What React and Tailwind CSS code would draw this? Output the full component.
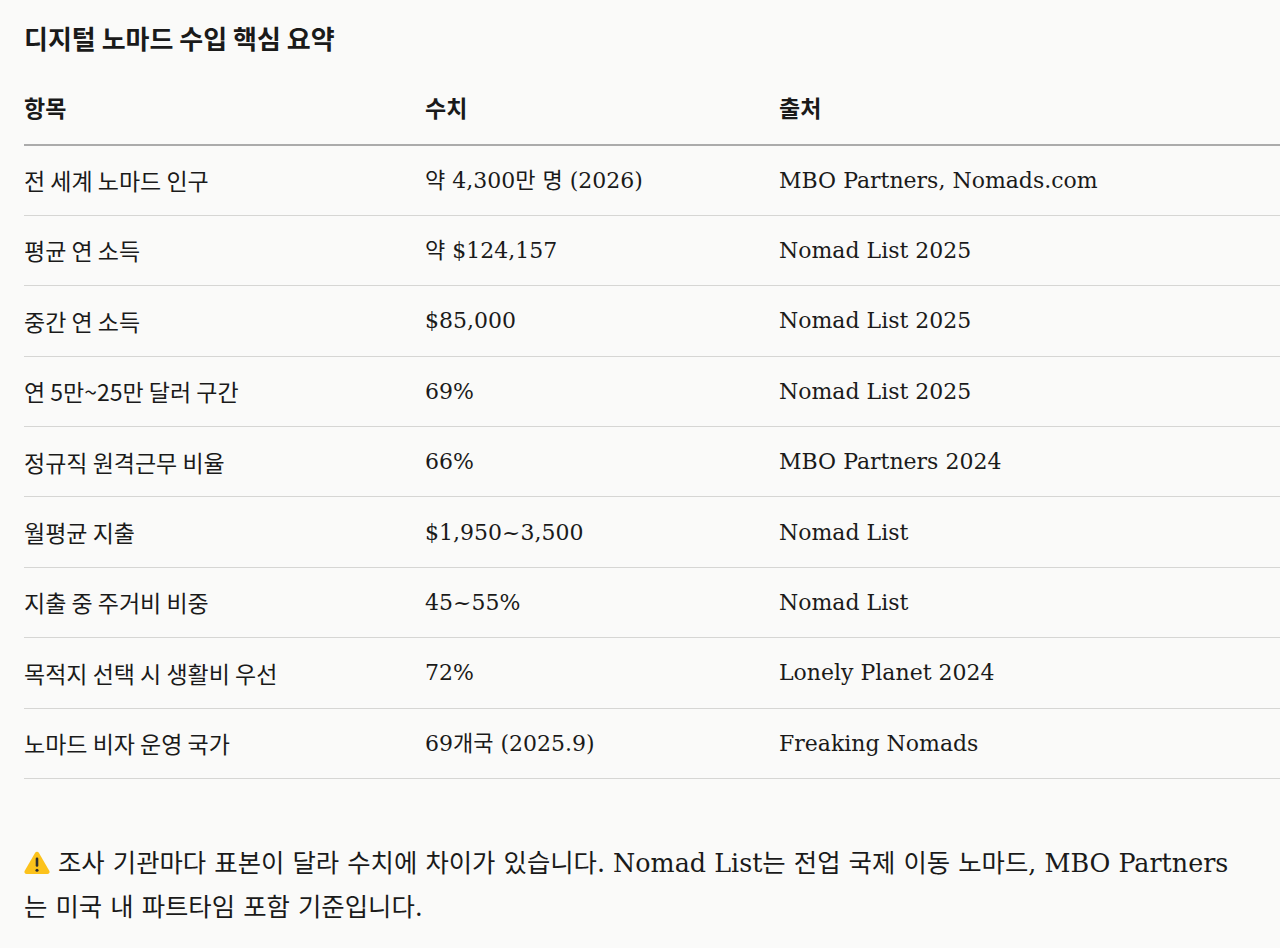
import React from "react";

const rows = [
  ["전 세계 노마드 인구", "약 4,300만 명 (2026)", "MBO Partners, Nomads.com"],
  ["평균 연 소득", "약 $124,157", "Nomad List 2025"],
  ["중간 연 소득", "$85,000", "Nomad List 2025"],
  ["연 5만~25만 달러 구간", "69%", "Nomad List 2025"],
  ["정규직 원격근무 비율", "66%", "MBO Partners 2024"],
  ["월평균 지출", "$1,950~3,500", "Nomad List"],
  ["지출 중 주거비 비중", "45~55%", "Nomad List"],
  ["목적지 선택 시 생활비 우선", "72%", "Lonely Planet 2024"],
  ["노마드 비자 운영 국가", "69개국 (2025.9)", "Freaking Nomads"],
];

function Warn() {
  return (
    <svg width="26" height="24" viewBox="0 0 24 22" className="inline-block align-[-3px] mr-[8px]">
      <path d="M10.3 1.6a2 2 0 0 1 3.4 0l9.6 16.6a2 2 0 0 1-1.7 3H2.4a2 2 0 0 1-1.7-3z" fill="#fcc21b" />
      <rect x="10.8" y="6" width="2.4" height="8.5" rx="1.1" fill="#2f2f2f" />
      <circle cx="12" cy="17.6" r="1.4" fill="#2f2f2f" />
    </svg>
  );
}

export default function App() {
  return (
    <div className="min-h-screen bg-[#fafaf9] pl-6 pt-[22px] text-[#1a1a1a] font-['DejaVu_Serif','Noto_Sans_CJK_KR',sans-serif]">
      <h2 className="h-8 leading-8 text-[26px] font-bold font-['Noto_Sans_CJK_KR',sans-serif]">
        디지털 노마드 수입 핵심 요약
      </h2>

      <table className="mt-[21px] w-full border-collapse text-[22px]">
        <thead>
          <tr className="h-[70px] border-b-2 border-[#ababab]">
            <th className="w-[401px] p-0 pb-1 text-left text-[23px] font-bold font-['Noto_Sans_CJK_KR',sans-serif]">항목</th>
            <th className="w-[354px] p-0 pb-1 text-left text-[23px] font-bold font-['Noto_Sans_CJK_KR',sans-serif]">수치</th>
            <th className="p-0 pb-1 text-left text-[23px] font-bold font-['Noto_Sans_CJK_KR',sans-serif]">출처</th>
          </tr>
        </thead>
        <tbody>
          {rows.map((r, i) => (
            <tr key={i} className="h-[70.4px] border-b border-[#d6d6d4]">
              <td className="p-0 text-[23px] font-['Noto_Sans_CJK_KR',sans-serif]">{r[0]}</td>
              <td className="p-0">{r[1]}</td>
              <td className="p-0">{r[2]}</td>
            </tr>
          ))}
        </tbody>
      </table>

      <p className="mt-[62px] pr-6 text-[25.4px] leading-[44px]">
        <Warn />
        조사 기관마다 표본이 달라 수치에 차이가 있습니다. Nomad List는 전업 국제 이동 노마드, MBO Partners
        <br />
        는 미국 내 파트타임 포함 기준입니다.
      </p>
    </div>
  );
}
